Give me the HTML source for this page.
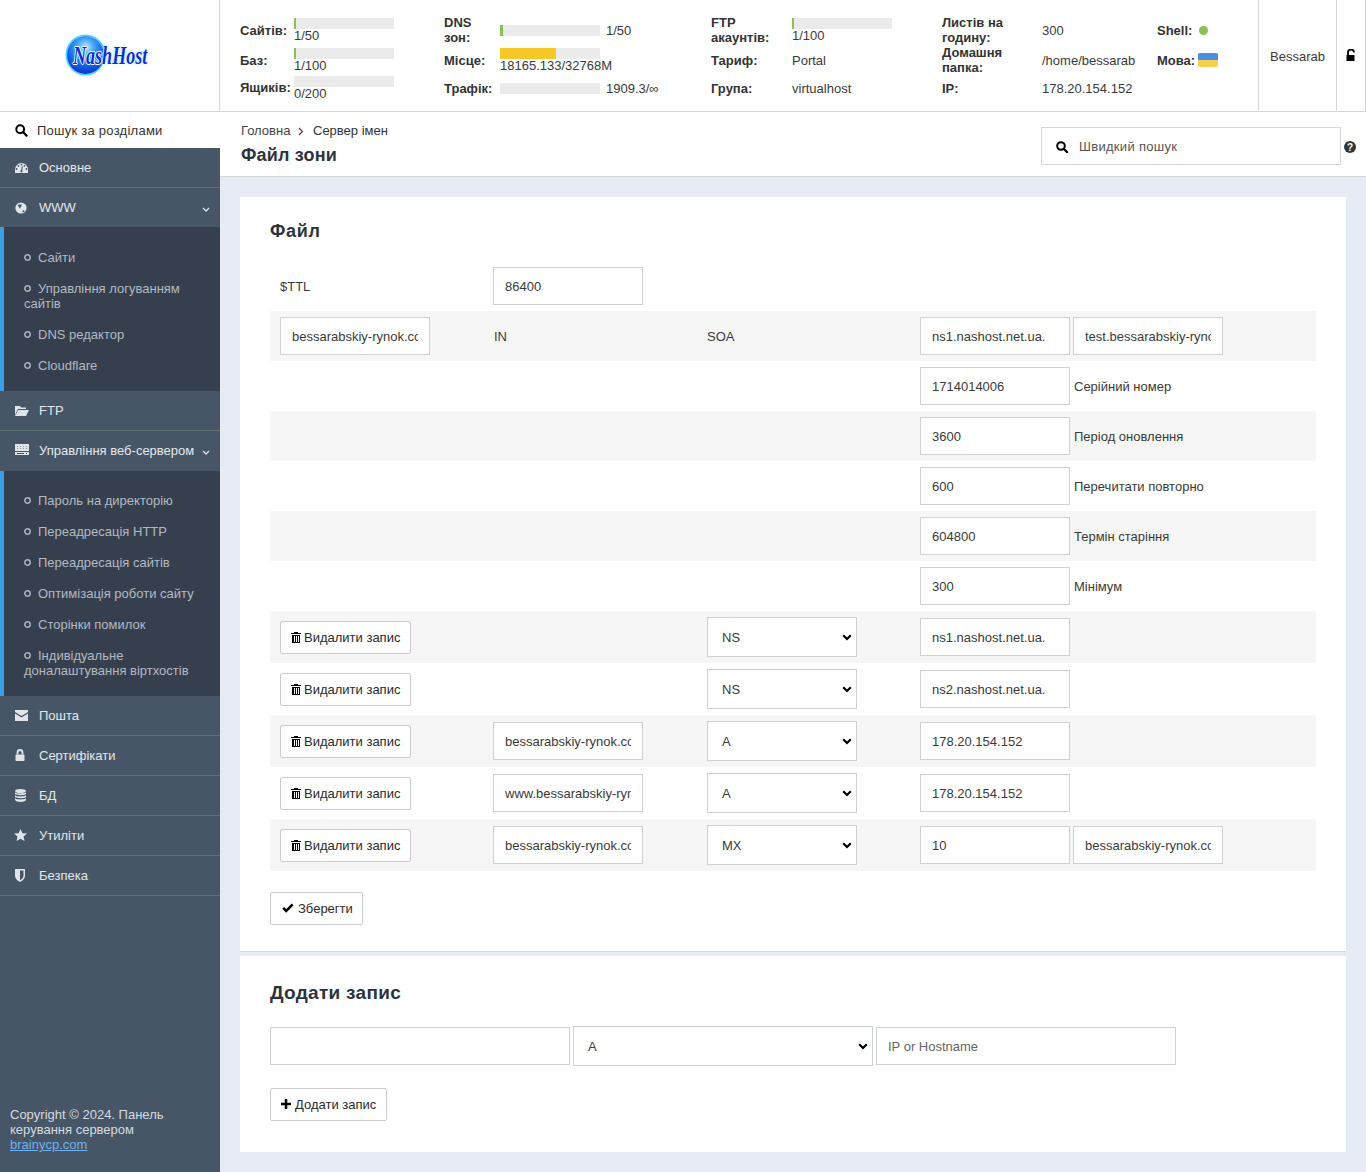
<!DOCTYPE html>
<html><head><meta charset="utf-8">
<style>
*{box-sizing:border-box;margin:0;padding:0}
html,body{width:1366px;height:1172px;overflow:hidden;background:#fff;font-family:"Liberation Sans",sans-serif;font-size:13px;color:#3a3a3a}
.a{position:absolute}
.t{position:absolute;white-space:nowrap;line-height:15px;font-size:13px}
.b{font-weight:bold;color:#333}
#hdr{position:absolute;left:0;top:0;width:1366px;height:112px;border-bottom:1px solid #d4d8d6}
#logo{position:absolute;left:0;top:0;width:220px;height:111px;border-right:1px solid #d4d8d6}
.bar{position:absolute;width:100px;height:11px;background:#ebebeb}
.bar i{position:absolute;left:0;top:0;height:11px;background:#8cc152}
#side{position:absolute;left:0;top:112px;width:220px;height:1060px;background:#475667}
.mi{position:absolute;left:0;width:220px;height:40px;border-bottom:1px solid #607070}
.mi .t{color:#e2e7ec;left:39px;top:12px}
.sub{position:absolute;left:0;width:220px;background:#363f4e;border-left:4px solid #3a9ee4}
.sub .t{color:#b2bac3;left:34px}
.bul{position:absolute;left:19px;width:7px;height:7px;border:2px solid #aab2bb;border-radius:50%}
#main{position:absolute;left:220px;top:112px;width:1146px;height:1060px;background:#e7ebf3}
#mhead{position:absolute;left:0;top:0;width:1146px;height:65px;background:#fff;border-bottom:1px solid #d4d8d6}
.panel{position:absolute;left:20px;width:1106px;background:#fff}
.row{position:absolute;left:30px;width:1046px}
.st{background:#f6f6f7}
.inp{position:absolute;width:150px;height:38px;border:1px solid #cdd2d0;background:#fff}
.inp span{position:absolute;left:11px;top:11px;line-height:15px;white-space:nowrap;overflow:hidden;width:126px}
.sel{position:absolute;width:150px;height:40px;border:1px solid #cdd2d0;background:#fff}
.sel span{position:absolute;left:14px;top:12px;line-height:15px}
.sel svg{position:absolute;right:4px;top:16px}
.btn{position:absolute;height:33px;border:1px solid #cdcad0;border-radius:2px;background:#fff}
.btn span{position:absolute;top:8px;line-height:15px;white-space:nowrap;color:#2a2a2a}
</style></head><body>

<div id="hdr">
  <div id="logo">
    <div class="a" style="left:67px;top:36px;width:37px;height:38px;border-radius:50%;background:radial-gradient(circle at 50% 30%,#bfeeff 0,#4aa8f8 25%,#1560e8 55%,#0a30c8 85%,#0824a8 100%);box-shadow:0 0 0 1.5px #3fd8ff"></div>
    <div class="a" style="left:73px;top:42px;font-family:'Liberation Serif',serif;font-size:26px;line-height:28px;font-style:italic;font-weight:bold;color:#0a2ed0;transform:scaleX(0.695);transform-origin:0 0;white-space:nowrap;text-shadow:-1px 0 #fff,1px 0 #fff,0 -1px #fff,0 1px #fff,0 0 2px #40e0ff,0 0 3px #40e0ff">NashHost</div>
  </div>
  <!-- col1 -->
  <div class="t b" style="left:240px;top:23px">Сайтів:</div>
  <div class="bar" style="left:294px;top:18px"><i style="width:2px"></i></div>
  <div class="t" style="left:294px;top:28px">1/50</div>
  <div class="t b" style="left:240px;top:53px">Баз:</div>
  <div class="bar" style="left:294px;top:48px"><i style="width:2px"></i></div>
  <div class="t" style="left:294px;top:58px">1/100</div>
  <div class="t b" style="left:240px;top:80px">Ящиків:</div>
  <div class="bar" style="left:294px;top:76px"></div>
  <div class="t" style="left:294px;top:86px">0/200</div>
  <!-- col2 -->
  <div class="t b" style="left:444px;top:15px">DNS</div>
  <div class="t b" style="left:444px;top:30px">зон:</div>
  <div class="bar" style="left:500px;top:25px"><i style="width:3px"></i></div>
  <div class="t" style="left:606px;top:23px">1/50</div>
  <div class="t b" style="left:444px;top:53px">Місце:</div>
  <div class="bar" style="left:500px;top:48px"><i style="width:56px;background:#f6c928"></i></div>
  <div class="t" style="left:500px;top:58px">18165.133/32768M</div>
  <div class="t b" style="left:444px;top:81px">Трафік:</div>
  <div class="bar" style="left:500px;top:83px"></div>
  <div class="t" style="left:606px;top:81px">1909.3/∞</div>
  <!-- col3 -->
  <div class="t b" style="left:711px;top:15px">FTP</div>
  <div class="t b" style="left:711px;top:30px">акаунтів:</div>
  <div class="bar" style="left:792px;top:18px"><i style="width:2px"></i></div>
  <div class="t" style="left:792px;top:28px">1/100</div>
  <div class="t b" style="left:711px;top:53px">Тариф:</div>
  <div class="t" style="left:792px;top:53px">Portal</div>
  <div class="t b" style="left:711px;top:81px">Група:</div>
  <div class="t" style="left:792px;top:81px">virtualhost</div>
  <!-- col4 -->
  <div class="t b" style="left:942px;top:15px">Листів на</div>
  <div class="t b" style="left:942px;top:30px">годину:</div>
  <div class="t" style="left:1042px;top:23px">300</div>
  <div class="t b" style="left:942px;top:45px">Домашня</div>
  <div class="t b" style="left:942px;top:60px">папка:</div>
  <div class="t" style="left:1042px;top:53px">/home/bessarab</div>
  <div class="t b" style="left:942px;top:81px">IP:</div>
  <div class="t" style="left:1042px;top:81px">178.20.154.152</div>
  <!-- col5 -->
  <div class="t b" style="left:1157px;top:23px">Shell:</div>
  <div class="a" style="left:1198.5px;top:25.5px;width:9px;height:9px;border-radius:50%;background:#8cc152"></div>
  <div class="t b" style="left:1157px;top:53px">Мова:</div>
  <div class="a" style="left:1198px;top:53px;width:20px;height:14px;border-radius:2px;overflow:hidden;background:#f6d04d"><div style="height:7px;background:#4a8fe0"></div></div>
  <!-- user -->
  <div class="a" style="left:1258px;top:0;width:1px;height:111px;background:#d4d8d6"></div>
  <div class="t" style="left:1270px;top:49px">Bessarab</div>
  <div class="a" style="left:1336px;top:0;width:1px;height:111px;background:#d4d8d6"></div>
  <div class="a" style="left:1365px;top:0;width:1px;height:111px;background:#d4d8d6"></div>
  <svg class="a" style="left:1346px;top:49px" width="10" height="12" viewBox="0 0 10 12"><path d="M2 6V3.5A3 3 0 0 1 8 3.5" fill="none" stroke="#000" stroke-width="1.8"/><rect x="0.5" y="6" width="8" height="6" fill="#000"/></svg>
</div>

<div id="side">
  <div class="a" style="left:0;top:0;width:220px;height:36px;background:#fff"></div>
  <svg class="a" style="left:15px;top:12px" width="13" height="13" viewBox="0 0 13 13"><circle cx="5.2" cy="5.2" r="3.9" fill="none" stroke="#000" stroke-width="2"/><path d="M8 8l3.6 3.6" stroke="#000" stroke-width="2.2" stroke-linecap="round"/></svg>
  <div class="t" style="left:37px;top:11px;color:#333;letter-spacing:0.25px">Пошук за розділами</div>

  <div class="mi" style="top:36px;height:40px">
    <svg class="a" style="left:15px;top:15px" width="13" height="10" viewBox="0 0 13 10"><path d="M0 6.5A6.5 6.5 0 0 1 13 6.5V10H0z" fill="#dfe5ea"/><g fill="#475667"><circle cx="6.5" cy="1.6" r=".9"/><circle cx="3.5" cy="2.9" r=".9"/><circle cx="9.5" cy="2.9" r=".9"/><circle cx="1.6" cy="6" r=".9"/><circle cx="11.4" cy="6" r=".9"/><circle cx="6.4" cy="8.3" r="1.1"/></g><path d="M7.4 3.4L6.4 8.3" stroke="#475667" stroke-width="1.1"/></svg>
    <div class="t" style="top:12px">Основне</div>
  </div>
  <div class="mi" style="top:76px;height:40px;border-bottom:none">
    <svg class="a" style="left:14.5px;top:13.5px" width="12" height="12" viewBox="0 0 12 12"><circle cx="6" cy="6" r="5.6" fill="#dfe5ea"/><path d="M2.6 3C3.6 2.3 5.6 2.3 7 2.7 6.4 4 5.5 5.4 5 6.8 4.2 5.6 3.3 4.3 2.6 3z" fill="#475667"/><circle cx="8.4" cy="9.2" r="1" fill="#475667"/></svg>
    <div class="t" style="top:12px">WWW</div>
    <svg class="a" style="left:201.5px;top:18.5px" width="8" height="5" viewBox="0 0 8 5"><path d="M1 1l3 3 3-3" fill="none" stroke="#dfe5ea" stroke-width="1.3"/></svg>
  </div>
  <div class="sub" style="top:115px;height:164px"></div>
  <svg class="a" style="left:23px;top:141px" width="9" height="9" viewBox="0 0 9 9"><circle cx="4.5" cy="4.5" r="2.7" fill="none" stroke="#aab2bb" stroke-width="1.5"/></svg>
  <div class="t" style="left:38px;top:138px;color:#b2bac3">Сайти</div>
  <svg class="a" style="left:23px;top:172px" width="9" height="9" viewBox="0 0 9 9"><circle cx="4.5" cy="4.5" r="2.7" fill="none" stroke="#aab2bb" stroke-width="1.5"/></svg>
  <div class="t" style="left:38px;top:169px;color:#b2bac3">Управління логуванням</div>
  <div class="t" style="left:24px;top:184px;color:#b2bac3">сайтів</div>
  <svg class="a" style="left:23px;top:218px" width="9" height="9" viewBox="0 0 9 9"><circle cx="4.5" cy="4.5" r="2.7" fill="none" stroke="#aab2bb" stroke-width="1.5"/></svg>
  <div class="t" style="left:38px;top:215px;color:#b2bac3">DNS редактор</div>
  <svg class="a" style="left:23px;top:249px" width="9" height="9" viewBox="0 0 9 9"><circle cx="4.5" cy="4.5" r="2.7" fill="none" stroke="#aab2bb" stroke-width="1.5"/></svg>
  <div class="t" style="left:38px;top:246px;color:#b2bac3">Cloudflare</div>

  <div class="mi" style="top:279px;height:40px">
    <svg class="a" style="left:15px;top:14px" width="14" height="11" viewBox="0 0 14 11"><path d="M0 1h5l1 1.5h5V4H3L0 10z" fill="#dfe5ea"/><path d="M3.2 5H14l-3 6H0z" fill="#dfe5ea"/></svg>
    <div class="t" style="top:12px">FTP</div>
  </div>
  <div class="mi" style="top:319px;height:40px;border-bottom:none">
    <svg class="a" style="left:15px;top:13px" width="14" height="11" viewBox="0 0 14 11" shape-rendering="crispEdges"><rect x="0" y="0" width="14" height="7" fill="#dfe5ea"/><rect x="0" y="8" width="14" height="3" fill="#dfe5ea"/><rect x="2" y="2" width="1" height="1" fill="#8a96a4"/><rect x="5" y="2" width="1" height="1" fill="#8a96a4"/><rect x="8" y="2" width="1" height="1" fill="#8a96a4"/><rect x="11" y="2" width="1" height="1" fill="#8a96a4"/><rect x="2" y="4" width="1" height="1" fill="#8a96a4"/><rect x="5" y="4" width="1" height="1" fill="#8a96a4"/><rect x="8" y="4" width="1" height="1" fill="#8a96a4"/><rect x="11" y="4" width="1" height="1" fill="#8a96a4"/><rect x="2" y="9" width="7" height="1" fill="#475667"/><rect x="11" y="9" width="1" height="1" fill="#475667"/></svg>
    <div class="t" style="top:12px">Управління веб-сервером</div>
    <svg class="a" style="left:201.5px;top:18.5px" width="8" height="5" viewBox="0 0 8 5"><path d="M1 1l3 3 3-3" fill="none" stroke="#dfe5ea" stroke-width="1.3"/></svg>
  </div>
  <div class="sub" style="top:359px;height:225px"></div>
  <svg class="a" style="left:23px;top:384px" width="9" height="9" viewBox="0 0 9 9"><circle cx="4.5" cy="4.5" r="2.7" fill="none" stroke="#aab2bb" stroke-width="1.5"/></svg>
  <div class="t" style="left:38px;top:381px;color:#b2bac3">Пароль на директорію</div>
  <svg class="a" style="left:23px;top:415px" width="9" height="9" viewBox="0 0 9 9"><circle cx="4.5" cy="4.5" r="2.7" fill="none" stroke="#aab2bb" stroke-width="1.5"/></svg>
  <div class="t" style="left:38px;top:412px;color:#b2bac3">Переадресація HTTP</div>
  <svg class="a" style="left:23px;top:446px" width="9" height="9" viewBox="0 0 9 9"><circle cx="4.5" cy="4.5" r="2.7" fill="none" stroke="#aab2bb" stroke-width="1.5"/></svg>
  <div class="t" style="left:38px;top:443px;color:#b2bac3">Переадресація сайтів</div>
  <svg class="a" style="left:23px;top:477px" width="9" height="9" viewBox="0 0 9 9"><circle cx="4.5" cy="4.5" r="2.7" fill="none" stroke="#aab2bb" stroke-width="1.5"/></svg>
  <div class="t" style="left:38px;top:474px;color:#b2bac3">Оптимізація роботи сайту</div>
  <svg class="a" style="left:23px;top:508px" width="9" height="9" viewBox="0 0 9 9"><circle cx="4.5" cy="4.5" r="2.7" fill="none" stroke="#aab2bb" stroke-width="1.5"/></svg>
  <div class="t" style="left:38px;top:505px;color:#b2bac3">Сторінки помилок</div>
  <svg class="a" style="left:23px;top:539px" width="9" height="9" viewBox="0 0 9 9"><circle cx="4.5" cy="4.5" r="2.7" fill="none" stroke="#aab2bb" stroke-width="1.5"/></svg>
  <div class="t" style="left:38px;top:536px;color:#b2bac3">Індивідуальне</div>
  <div class="t" style="left:24px;top:551px;color:#b2bac3">доналаштування віртхостів</div>

  <div class="mi" style="top:584px">
    <svg class="a" style="left:15px;top:14px" width="13" height="11" viewBox="0 0 13 11"><path d="M0 0h13v2L6.5 6 0 2z" fill="#dfe5ea"/><path d="M0 3.5l6.5 4 6.5-4V11H0z" fill="#dfe5ea"/></svg>
    <div class="t" style="top:12px">Пошта</div>
  </div>
  <div class="mi" style="top:624px">
    <svg class="a" style="left:15px;top:13px" width="10" height="12" viewBox="0 0 10 12"><path d="M2.5 5.5V3.5a2.5 2.5 0 0 1 5 0v2" fill="none" stroke="#dfe5ea" stroke-width="1.8"/><rect x="0.5" y="5.5" width="9" height="6.5" rx="1" fill="#dfe5ea"/></svg>
    <div class="t" style="top:12px">Сертифікати</div>
  </div>
  <div class="mi" style="top:664px">
    <svg class="a" style="left:15px;top:13px" width="11" height="13" viewBox="0 0 11 13"><ellipse cx="5.5" cy="2" rx="5.5" ry="2" fill="#dfe5ea"/><path d="M0 3.2c1 1.6 10 1.6 11 0V5c-1 1.6-10 1.6-11 0z M0 6.2c1 1.6 10 1.6 11 0V8c-1 1.6-10 1.6-11 0z M0 9.2c1 1.6 10 1.6 11 0V11c-1 2.6-10 2.6-11 0z" fill="#dfe5ea"/></svg>
    <div class="t" style="top:12px">БД</div>
  </div>
  <div class="mi" style="top:704px">
    <svg class="a" style="left:14px;top:13px" width="13" height="13" viewBox="0 0 13 13"><path d="M6.5 0l1.9 4.2 4.6.4-3.5 3 1.1 4.5-4.1-2.4-4 2.4 1-4.5L0 4.6l4.6-.4z" fill="#dfe5ea"/></svg>
    <div class="t" style="top:12px">Утиліти</div>
  </div>
  <div class="mi" style="top:744px">
    <svg class="a" style="left:15px;top:13px" width="10" height="13" viewBox="0 0 10 13"><path d="M0 0h10v6.5C10 10 7 12 5 13 3 12 0 10 0 6.5z" fill="#dfe5ea"/><path d="M5 1.5h3.5v5C8.5 9 6.5 10.5 5 11.3z" fill="#485363"/></svg>
    <div class="t" style="top:12px">Безпека</div>
  </div>

  <div class="t" style="left:10px;top:995px;color:#d4dae0">Copyright © 2024. Панель</div>
  <div class="t" style="left:10px;top:1010px;color:#d4dae0">керування сервером</div>
  <div class="t" style="left:10px;top:1025px;color:#6db3f2;text-decoration:underline">brainycp.com</div>
</div>

<div id="main">
  <div id="mhead">
    <div class="t" style="left:21px;top:11px;color:#444">Головна</div>
    <svg class="a" style="left:78px;top:15px" width="6" height="9" viewBox="0 0 6 9"><path d="M1 1l3.5 3.5L1 8" fill="none" stroke="#444" stroke-width="1.2"/></svg>
    <div class="t" style="left:93px;top:11px;color:#333">Сервер імен</div>
    <div class="a b" style="left:21px;top:32px;letter-spacing:0.2px;font-size:18px;line-height:22px;white-space:nowrap;color:#2b333d">Файл зони</div>
    <div class="a" style="left:821px;top:15px;width:300px;height:38px;border:1px solid #d4d8d6"></div>
    <svg class="a" style="left:836px;top:29px" width="13" height="12" viewBox="0 0 13 12"><circle cx="5" cy="5" r="3.8" fill="none" stroke="#000" stroke-width="2"/><path d="M7.8 7.8l3.3 3.3" stroke="#000" stroke-width="2.2" stroke-linecap="round"/></svg>
    <div class="t" style="left:859px;top:27px;color:#555;letter-spacing:0.3px">Швидкий пошук</div>
    <svg class="a" style="left:1124px;top:29px" width="12" height="12" viewBox="0 0 12 12"><circle cx="6" cy="6" r="6" fill="#2e3640"/><text x="6" y="9.6" text-anchor="middle" font-family="Liberation Sans" font-weight="bold" font-size="10" fill="#fff">?</text></svg>
  </div>
</div>
<div class="a" style="left:240px;top:197px;width:1106px;height:754px;background:#fff"></div>
<div class="a" style="left:240px;top:951px;width:1106px;height:1px;background:#d3d9e6"></div>
<div class="a" style="left:240px;top:956px;width:1106px;height:196px;background:#fff"></div>
<div class="a b" style="left:270px;top:220px;letter-spacing:0.7px;font-size:18px;line-height:22px;color:#2b333d">Файл</div>
<div class="a st" style="left:270px;top:311px;width:1046px;height:50px"></div>
<div class="a st" style="left:270px;top:411px;width:1046px;height:50px"></div>
<div class="a st" style="left:270px;top:511px;width:1046px;height:50px"></div>
<div class="a st" style="left:270px;top:611px;width:1046px;height:52px"></div>
<div class="a st" style="left:270px;top:715px;width:1046px;height:52px"></div>
<div class="a st" style="left:270px;top:819px;width:1046px;height:52px"></div>
<div class="t" style="left:280px;top:279px">$TTL</div>
<div class="inp" style="left:493px;top:267px;width:150px"><span>86400</span></div>
<div class="inp" style="left:280px;top:317px;width:150px"><span>bessarabskiy-rynok.com.</span></div>
<div class="t" style="left:494px;top:329px">IN</div>
<div class="t" style="left:707px;top:329px">SOA</div>
<div class="inp" style="left:920px;top:317px;width:150px"><span>ns1.nashost.net.ua.</span></div>
<div class="inp" style="left:1073px;top:317px;width:150px"><span>test.bessarabskiy-rynok.com.</span></div>
<div class="inp" style="left:920px;top:367px;width:150px"><span>1714014006</span></div>
<div class="t" style="left:1074px;top:379px">Серійний номер</div>
<div class="inp" style="left:920px;top:417px;width:150px"><span>3600</span></div>
<div class="t" style="left:1074px;top:429px">Період оновлення</div>
<div class="inp" style="left:920px;top:467px;width:150px"><span>600</span></div>
<div class="t" style="left:1074px;top:479px">Перечитати повторно</div>
<div class="inp" style="left:920px;top:517px;width:150px"><span>604800</span></div>
<div class="t" style="left:1074px;top:529px">Термін старіння</div>
<div class="inp" style="left:920px;top:567px;width:150px"><span>300</span></div>
<div class="t" style="left:1074px;top:579px">Мінімум</div>
<div class="btn" style="left:280px;top:621px;width:131px"><svg class="a" style="left:10px;top:10px" width="10" height="12" viewBox="0 0 10 12" shape-rendering="crispEdges"><rect x="3" y="0" width="4" height="1" fill="#000"/><rect x="0" y="1" width="10" height="1" fill="#000"/><path d="M1 2.5h8v8.7H1z" fill="#000"/><rect x="3" y="4" width="1" height="6" fill="#fff"/><rect x="5" y="4" width="1" height="6" fill="#fff"/><rect x="7" y="4" width="1" height="6" fill="#fff"/></svg><span style="left:23px">Видалити запис</span></div>
<div class="sel" style="left:707px;top:617px;width:150px"><span>NS</span><svg width="10" height="7" viewBox="0 0 10 7"><path d="M1.2 1.2L5 5l3.8-3.8" fill="none" stroke="#000" stroke-width="2.2"/></svg></div>
<div class="inp" style="left:920px;top:618px;width:150px"><span>ns1.nashost.net.ua.</span></div>
<div class="btn" style="left:280px;top:673px;width:131px"><svg class="a" style="left:10px;top:10px" width="10" height="12" viewBox="0 0 10 12" shape-rendering="crispEdges"><rect x="3" y="0" width="4" height="1" fill="#000"/><rect x="0" y="1" width="10" height="1" fill="#000"/><path d="M1 2.5h8v8.7H1z" fill="#000"/><rect x="3" y="4" width="1" height="6" fill="#fff"/><rect x="5" y="4" width="1" height="6" fill="#fff"/><rect x="7" y="4" width="1" height="6" fill="#fff"/></svg><span style="left:23px">Видалити запис</span></div>
<div class="sel" style="left:707px;top:669px;width:150px"><span>NS</span><svg width="10" height="7" viewBox="0 0 10 7"><path d="M1.2 1.2L5 5l3.8-3.8" fill="none" stroke="#000" stroke-width="2.2"/></svg></div>
<div class="inp" style="left:920px;top:670px;width:150px"><span>ns2.nashost.net.ua.</span></div>
<div class="btn" style="left:280px;top:725px;width:131px"><svg class="a" style="left:10px;top:10px" width="10" height="12" viewBox="0 0 10 12" shape-rendering="crispEdges"><rect x="3" y="0" width="4" height="1" fill="#000"/><rect x="0" y="1" width="10" height="1" fill="#000"/><path d="M1 2.5h8v8.7H1z" fill="#000"/><rect x="3" y="4" width="1" height="6" fill="#fff"/><rect x="5" y="4" width="1" height="6" fill="#fff"/><rect x="7" y="4" width="1" height="6" fill="#fff"/></svg><span style="left:23px">Видалити запис</span></div>
<div class="inp" style="left:493px;top:722px;width:150px"><span>bessarabskiy-rynok.com.</span></div>
<div class="sel" style="left:707px;top:721px;width:150px"><span>A</span><svg width="10" height="7" viewBox="0 0 10 7"><path d="M1.2 1.2L5 5l3.8-3.8" fill="none" stroke="#000" stroke-width="2.2"/></svg></div>
<div class="inp" style="left:920px;top:722px;width:150px"><span>178.20.154.152</span></div>
<div class="btn" style="left:280px;top:777px;width:131px"><svg class="a" style="left:10px;top:10px" width="10" height="12" viewBox="0 0 10 12" shape-rendering="crispEdges"><rect x="3" y="0" width="4" height="1" fill="#000"/><rect x="0" y="1" width="10" height="1" fill="#000"/><path d="M1 2.5h8v8.7H1z" fill="#000"/><rect x="3" y="4" width="1" height="6" fill="#fff"/><rect x="5" y="4" width="1" height="6" fill="#fff"/><rect x="7" y="4" width="1" height="6" fill="#fff"/></svg><span style="left:23px">Видалити запис</span></div>
<div class="inp" style="left:493px;top:774px;width:150px"><span>www.bessarabskiy-rynok.com.</span></div>
<div class="sel" style="left:707px;top:773px;width:150px"><span>A</span><svg width="10" height="7" viewBox="0 0 10 7"><path d="M1.2 1.2L5 5l3.8-3.8" fill="none" stroke="#000" stroke-width="2.2"/></svg></div>
<div class="inp" style="left:920px;top:774px;width:150px"><span>178.20.154.152</span></div>
<div class="btn" style="left:280px;top:829px;width:131px"><svg class="a" style="left:10px;top:10px" width="10" height="12" viewBox="0 0 10 12" shape-rendering="crispEdges"><rect x="3" y="0" width="4" height="1" fill="#000"/><rect x="0" y="1" width="10" height="1" fill="#000"/><path d="M1 2.5h8v8.7H1z" fill="#000"/><rect x="3" y="4" width="1" height="6" fill="#fff"/><rect x="5" y="4" width="1" height="6" fill="#fff"/><rect x="7" y="4" width="1" height="6" fill="#fff"/></svg><span style="left:23px">Видалити запис</span></div>
<div class="inp" style="left:493px;top:826px;width:150px"><span>bessarabskiy-rynok.com.</span></div>
<div class="sel" style="left:707px;top:825px;width:150px"><span>MX</span><svg width="10" height="7" viewBox="0 0 10 7"><path d="M1.2 1.2L5 5l3.8-3.8" fill="none" stroke="#000" stroke-width="2.2"/></svg></div>
<div class="inp" style="left:920px;top:826px;width:150px"><span>10</span></div>
<div class="inp" style="left:1073px;top:826px;width:150px"><span>bessarabskiy-rynok.com.</span></div>
<div class="btn" style="left:270px;top:892px;width:93px"><svg class="a" style="left:11px;top:10px" width="12" height="10" viewBox="0 0 12 10"><path d="M1.2 4.8l3 3L10.6 1.4" fill="none" stroke="#000" stroke-width="2.6"/></svg><span style="left:27px">Зберегти</span></div>
<div class="a b" style="left:270px;top:982px;letter-spacing:0.3px;font-size:19px;line-height:22px;color:#2b333d;white-space:nowrap">Додати запис</div>
<div class="inp" style="left:270px;top:1027px;width:300px"></div>
<div class="sel" style="left:573px;top:1026px;width:300px"><span>A</span><svg width="10" height="7" viewBox="0 0 10 7"><path d="M1.2 1.2L5 5l3.8-3.8" fill="none" stroke="#000" stroke-width="2.2"/></svg></div>
<div class="inp" style="left:876px;top:1027px;width:300px"><span style="color:#666;width:280px">IP or Hostname</span></div>
<div class="btn" style="left:270px;top:1088px;width:117px"><svg class="a" style="left:10px;top:10px" width="10" height="10" viewBox="0 0 10 10"><path d="M5 0v10M0 5h10" stroke="#000" stroke-width="2.5"/></svg><span style="left:24px">Додати запис</span></div>
</body></html>
